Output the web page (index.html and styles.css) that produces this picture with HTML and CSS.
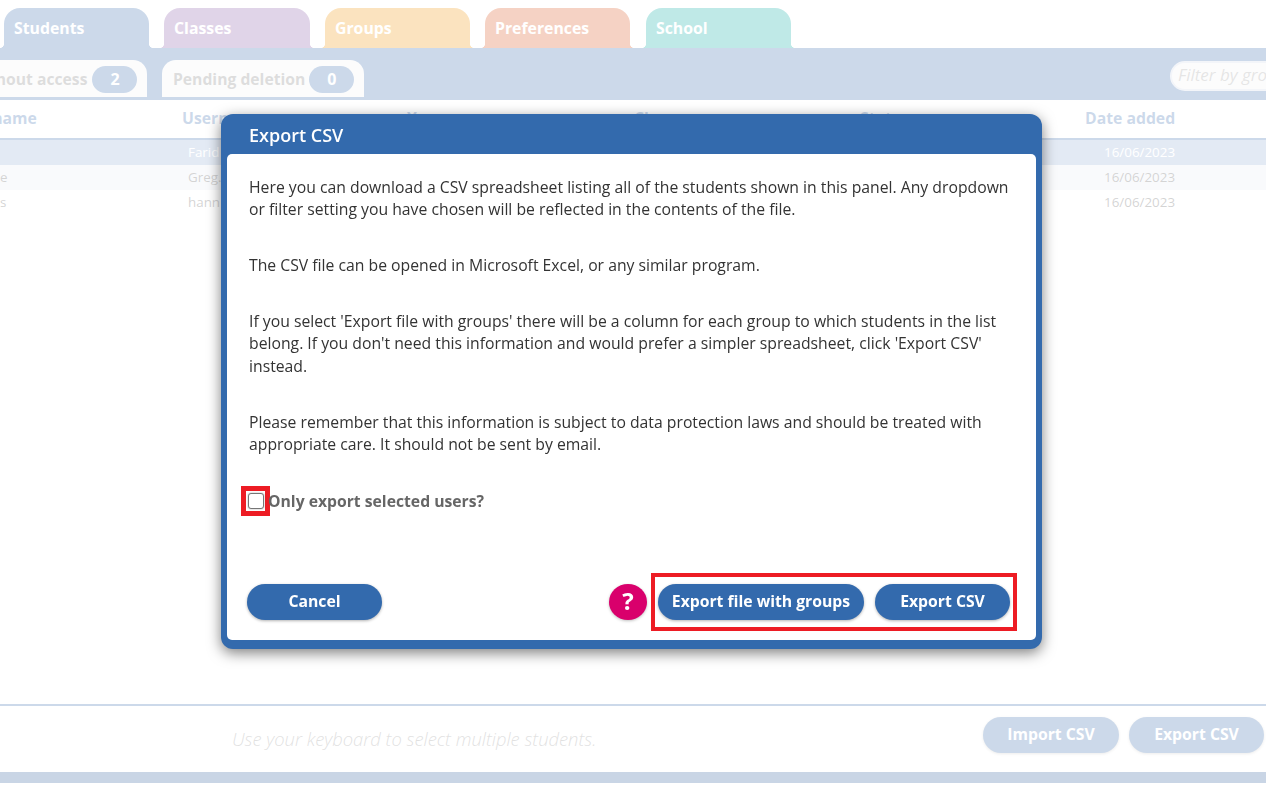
FILE: index.html
```html
<!DOCTYPE html>
<html lang="en">
<head>
<meta charset="utf-8">
<title>Export CSV</title>
<link rel="stylesheet" href="styles.css">
</head>
<body>
<div class="page">
  <nav class="tabs">
    <div class="tab tab-students">Students</div>
    <div class="tab tab-classes">Classes</div>
    <div class="tab tab-groups">Groups</div>
    <div class="tab tab-prefs">Preferences</div>
    <div class="tab tab-school">School</div>
  </nav>
  <div class="band">
    <div class="subtab subtab-first">Without access <span class="badge">2</span></div>
    <div class="subtab subtab-second">Pending deletion <span class="badge">0</span></div>
    <div class="filter">Filter by group</div>
  </div>
  <main class="table">
    <div class="row head">
      <div class="head-first">Last name</div><div>Username</div><div>Year</div><div>Class</div><div>Status</div><div>Date added</div>
    </div>
    <div class="row body selected">
      <div></div><div class="cell-user">Farid</div><div></div><div></div><div></div><div class="cell-date">16/06/2023</div>
    </div>
    <div class="row body tinted">
      <div class="cell-first">e</div><div class="cell-user">Greg.</div><div></div><div></div><div></div><div class="cell-date">16/06/2023</div>
    </div>
    <div class="row body">
      <div class="cell-first">s</div><div class="cell-user">hann</div><div></div><div></div><div></div><div class="cell-date">16/06/2023</div>
    </div>
  </main>
  <footer class="foot">
    <p class="hint">Use your keyboard to select multiple students.</p>
    <div class="foot-actions">
      <div class="foot-btn foot-btn-import">Import CSV</div>
      <div class="foot-btn foot-btn-export">Export CSV</div>
    </div>
  </footer>
  <div class="bottom-band"></div>
</div>

<div class="overlay"></div>

<section class="modal">
  <h1 class="modal-title">Export CSV</h1>
  <div class="modal-body">
    <p>Here you can download a CSV spreadsheet listing all of the students shown in this panel. Any dropdown or filter setting you have chosen will be reflected in the contents of the file.</p>
    <p>The CSV file can be opened in Microsoft Excel, or any similar program.</p>
    <p>If you select 'Export file with groups' there will be a column for each group to which students in the list belong. If you don't need this information and would prefer a simpler spreadsheet, click 'Export CSV' instead.</p>
    <p>Please remember that this information is subject to data protection laws and should be treated with appropriate care. It should not be sent by email.</p>
    <div class="check-row">
      <span class="check-mark"><input type="checkbox" class="check"></span>
      <label class="check-label">Only export selected users?</label>
    </div>
    <div class="actions">
      <button class="btn btn-cancel">Cancel</button>
      <span class="help">?</span>
      <div class="mark-box">
        <button class="btn btn-groups">Export file with groups</button>
        <button class="btn btn-csv">Export CSV</button>
      </div>
    </div>
  </div>
</section>
</body>
</html>
```
FILE: styles.css
```css
* { box-sizing: border-box; }
html, body { margin: 0; padding: 0; height: 787px; overflow: hidden; background: #fff; }
body { font-family: "Open Sans", "Noto Sans", sans-serif; color: #333; }

.page { width: 1266px; height: 787px; display: flex; flex-direction: column; overflow: hidden; padding-bottom: 4px; }

/* top tabs */
.tabs { display: flex; height: 48px; padding: 8px 0 0 4px; gap: 15px; flex: none; }
.tab { position: relative; width: 145px; height: 40px; border-radius: 16px 16px 0 0; padding: 7px 10px 0; color: #fff; font-weight: 700; font-size: 15.8px; line-height: 26px; background: var(--tab); }
.tab::before, .tab::after { content: ""; position: absolute; bottom: 0; width: 5px; height: 5px; }
.tab::before { left: -5px; background: radial-gradient(circle at 0 0, transparent 5px, var(--tab) 5.5px); }
.tab::after { right: -5px; background: radial-gradient(circle at 100% 0, transparent 5px, var(--tab) 5.5px); }
.tab-students { --tab: #3469ad; }
.tab-classes { --tab: #8454a4; width: 146px; }
.tab-groups { --tab: #f09000; }
.tab-prefs { --tab: #d84c14; }
.tab-school { --tab: #00a8a0; margin-left: 1px; }

/* blue band with sub tabs */
.band { flex: none; height: 52px; background: #3469ad; display: flex; align-items: flex-start; padding: 12px 0 0 0; position: relative; }
.subtab { height: 37px; background: #f4f4f4; border-radius: 14px 14px 0 0; color: #777; font-weight: 700; font-size: 15.7px; line-height: 38px; display: flex; gap: 4px; padding-left: 11px; white-space: nowrap; }
.subtab-first { width: 192px; margin-left: -45px; padding-left: 14px; gap: 5px; }
.subtab-second { width: 202px; margin-left: 15px; }
.badge { width: 45px; height: 27px; margin-top: 6px; border-radius: 14px; background: #3469ad; color: #fff; text-align: center; line-height: 27px; font-size: 16px; flex: none; }
.filter { margin: 1px -104px 0 auto; width: 200px; height: 30px; border: 2px solid #d0d8e8; border-radius: 15px; background: #f4f4f4; color: #999; font-style: italic; font-size: 17px; line-height: 24px; padding-left: 6px; white-space: nowrap; flex: none; }

/* table */
.table { flex: 1; margin-left: -38px; min-height: 0; }
.row { display: grid; grid-template-columns: 220px 225px 227px 226px 225px 1fr; }
.head { height: 40px; border-bottom: 2px solid #3469ad; color: #3469ad; font-weight: 700; font-size: 15.75px; line-height: 36px; white-space: nowrap; }
.head-first { margin-left: -7px; }
.body { height: 25px; font-size: 13.4px; line-height: 24px; color: #555; white-space: nowrap; }
.selected { background: #90acd4; color: #fff; }
.tinted { background: #e8ecf4; }
.cell-first { padding-left: 38px; }
.cell-user { padding-left: 6px; }
.cell-date { padding-left: 19px; }

/* footer */
.foot { flex: none; height: 68px; border-top: 2px solid #3469ad; display: flex; position: relative; align-items: flex-start; }
.hint { margin: 20px 0 0 232px; font-style: italic; font-size: 18.4px; line-height: 26px; color: #888; font-weight: 300; white-space: nowrap; }
.foot-actions { margin-left: auto; margin-right: 2px; margin-top: 11px; display: flex; gap: 10px; }
.foot-btn { height: 36px; border-radius: 18px; background: #3469ad; color: #fff; font-weight: 700; font-size: 15.75px; line-height: 34px; text-align: center; box-shadow: 0 1px 3px rgba(0,0,0,.3); }
.foot-btn-import { width: 136px; }
.foot-btn-export { width: 135px; }
.bottom-band { flex: none; height: 11px; background: #2a5a99; }

/* dim layer and dialog */
.overlay { position: fixed; inset: 0; background: rgba(255,255,255,.75); }
.modal { position: absolute; left: 221px; top: 114px; width: 821px; height: 535px; background: #336aad; border-radius: 12px; padding: 0 6px 9px; box-shadow: 0 4px 14px rgba(0,0,0,.5); display: flex; flex-direction: column; }
.modal-title { margin: 0; height: 40px; padding-left: 22px; color: #fff; font-size: 18px; font-weight: 600; line-height: 43px; flex: none; }
.modal-body { flex: 1; background: #fff; border-radius: 5px; padding: 22px 22px 0; font-size: 15.76px; line-height: 22.4px; color: #333; display: flex; flex-direction: column; }
.modal-body p { margin: 0 0 33.4px; }

.check-row { display: flex; align-items: center; margin: -3px 0 0 -8px; height: 30px; }
.check-mark { width: 29px; height: 30px; border: 5px solid #ed1c24; display: flex; align-items: center; justify-content: center; flex: none; }
.check { margin: 0; width: 16px; height: 16px; appearance: none; background: #fff; border: 1.5px solid #767676; border-radius: 3px; box-shadow: 0 0 2px rgba(0,0,0,.35); }
.check-label { margin-left: -2px; font-weight: 700; color: #666; font-size: 15.72px; }

.actions { margin-top: auto; margin-left: -2px; margin-bottom: 9px; display: flex; align-items: center; line-height: 34px; }
.actions > * { flex: none; }
.btn { height: 36px; border: 0; border-radius: 18px; background: #336aad; color: #fff; font-family: inherit; font-weight: 700; font-size: 15.75px; line-height: 34px; box-shadow: 0 1px 3px rgba(0,0,0,.3); padding: 0 0 2px; }
.btn-cancel { width: 135px; }
.help { margin-left: 227px; width: 38px; height: 36px; border-radius: 50%; background: #d9006c; color: #fff; font-weight: 700; font-size: 24px; line-height: 34px; text-align: center; box-shadow: 0 1px 3px rgba(0,0,0,.25); }
.mark-box { margin-left: 4px; width: 366px; height: 58px; border: 4px solid #ed1c24; display: flex; align-items: center; gap: 11px; padding-left: 3px; }
.btn-groups { width: 206px; }
.btn-csv { width: 135px; }
```
